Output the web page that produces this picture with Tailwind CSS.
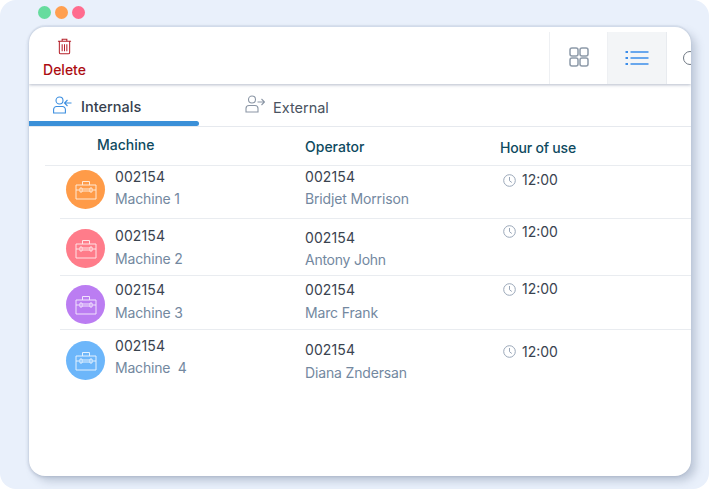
<!DOCTYPE html>
<html lang="en">
<head>
  <meta charset="UTF-8">
  <meta name="viewport" content="width=device-width,initial-scale=1">
  <title>Machines</title>
  <script src="https://cdn.jsdelivr.net/npm/@tailwindcss/browser@4"></script>
</head>
<body class="bg-white overflow-hidden font-['Inter',sans-serif]">
  <div class="w-[709px] h-[489px] bg-[#e9f0fb] rounded-[16px] pl-[29px] pt-[6px]">
    <!-- window dots -->
    <div class="flex gap-[4px] pl-[9px] h-[13px]">
      <span class="w-[13px] h-[13px] rounded-full bg-[#66dc9e]"></span>
      <span class="w-[13px] h-[13px] rounded-full bg-[#ff9f50]"></span>
      <span class="w-[13px] h-[13px] rounded-full bg-[#ff6b8e]"></span>
    </div>

    <div class="mt-[8px] w-[662px] h-[449px] bg-white rounded-[16px] overflow-hidden shadow-[0_-2px_1px_rgba(90,105,135,0.1),5px_5px_9px_rgba(90,105,135,0.3),-1px_1px_3px_rgba(90,105,135,0.22)]">
      <!-- toolbar -->
      <div class="h-[57px] flex shadow-[0_1px_3px_rgba(90,105,135,0.45)] relative">
        <div class="w-[520px] shrink-0 pl-[14px] pt-[11px]">
          <div class="w-[43px] flex flex-col items-center">
            <svg class="w-[15px] h-[17px]" viewBox="0 0 16 18" fill="none" stroke="#b5202a" stroke-width="1.1">
              <path d="M1 3.500h14M5.500 3.300V1.200h5v2.100M2.500 3.700v11.600c0 .9.600 1.500 1.500 1.500h8c.9 0 1.500-.6 1.500-1.500V3.700M5.500 6.500v7.500M8 6.500v7.500M10.500 6.500v7.500"/>
            </svg>
            <span class="mt-[7px] text-[14px] leading-[16px] font-medium text-[#ac0d12]">Delete</span>
          </div>
        </div>
        <div class="w-[59px] h-[52px] mt-[5px] shrink-0 border-x border-[#eef0f3] flex items-center justify-center">
          <svg class="w-[20px] h-[20px] -mt-[2px]" viewBox="0 0 20 20" fill="none" stroke="#8d9aa9" stroke-width="1.5">
            <rect x="1" y="1" width="8" height="8" rx="2"/><rect x="11" y="1" width="8" height="8" rx="2"/>
            <rect x="1" y="11" width="8" height="8" rx="2"/><rect x="11" y="11" width="8" height="8" rx="2"/>
          </svg>
        </div>
        <div class="w-[59px] h-[52px] mt-[5px] shrink-0 bg-[#f3f5f7] border-r border-[#e8ebef] flex items-center justify-center">
          <svg class="w-[24px] h-[16px]" viewBox="0 0 24 16" fill="none" stroke="#3b8dea" stroke-width="1.5">
            <path d="M5.500 2h18M5.500 8h18M5.500 14h18"/>
            <path d="M0.500 2h2.500M0.500 8h2.500M0.500 14h2.500" stroke-width="2.200"/>
          </svg>
        </div>
        <div class="pl-[16px] pt-[24px] shrink-0">
          <span class="block w-[14px] h-[14px] rounded-full border-[1.5px] border-[#6f7883]"></span>
        </div>
      </div>

      <!-- tabs -->
      <div class="h-[43px] flex border-b border-[#e6e9ee] relative">
        <div class="w-[170px] h-[42px] pl-[24px] pt-[12px] flex gap-[9px] relative">
          <svg class="w-[19px] h-[18px]" viewBox="0 0 19 18" fill="none" stroke="#3d8fe0" stroke-width="1.1">
            <circle cx="6.500" cy="4.500" r="3.500"/>
            <path d="M0.600 17h11.800v-3.500a3 3 0 0 0-3-3H3.600a3 3 0 0 0-3 3zM18.500 7h-7M14.500 4l-3 3 3 3"/>
          </svg>
          <span class="text-[14.5px] leading-[22px] font-medium text-[#36404e]">Internals</span>
          <span class="absolute left-0 bottom-0 w-[170px] h-[5px] rounded-r-full bg-[#3b90d8]"></span>
        </div>
        <div class="pl-[46px] pt-[11px] flex gap-[8px]">
          <svg class="w-[20px] h-[18px]" viewBox="0 0 20 18" fill="none" stroke="#8b96a5" stroke-width="1.100">
            <circle cx="7" cy="4.500" r="3.500"/>
            <path d="M1 17h12v-3.500a3 3 0 0 0-3-3H4a3 3 0 0 0-3 3zM12.500 7h7M16.500 4l3 3-3 3"/>
          </svg>
          <span class="text-[14.500px] leading-[23px] pt-[1px] text-[#4a5361]">External</span>
        </div>
      </div>

      <!-- table -->
      <div class="ml-[16px]">
        <div class="h-[39px] grid grid-cols-[260px_195px_1fr] border-b border-[#e9ecf0] text-[14px] font-medium text-[#0e4a60] leading-[16px]">
          <span class="pl-[52px] pt-[10px]">Machine</span>
          <span class="pt-[12px]">Operator</span>
          <span class="pt-[13px] tracking-[-0.2px]">Hour of use</span>
        </div>

        <div class="ml-[15px]">
          <!-- row 1 -->
          <div class="h-[53px] grid grid-cols-[245px_195px_1fr] border-b border-[#e9ecf0] text-[14px] leading-[20px]">
            <div class="flex pl-[6px]">
              <span class="mt-[4px] w-[39px] h-[39px] rounded-full bg-[#ff9b48] flex items-center justify-center">
                <svg class="w-[22px] h-[20px]" viewBox="0 0 22 20" fill="none" stroke="#ffe9d6" stroke-width="1"><path d="M7.500 5V1.500h7V5M1 5h20v14H1zM1 10h4M17 10h4M5 8h2v4H5zM15 8h2v4h-2zM7 9h8M7 11h8"/></svg>
              </span>
              <div class="pl-[10px] pt-[1px]">
                <p class="text-[#3a4350] tracking-[0.1px]">002154</p>
                <p class="mt-[2px] text-[#73889f] tracking-[-0.15px]">Machine 1</p>
              </div>
            </div>
            <div class="pt-[1px]">
              <p class="text-[#3a4350] tracking-[0.1px]">002154</p>
              <p class="mt-[2px] text-[#73889f] tracking-[-0.15px]">Bridjet Morrison</p>
            </div>
            <div class="flex items-start gap-[6px] pl-[3px] pt-[4px]">
              <svg class="w-[13px] h-[13px] mt-[4px]" viewBox="0 0 13 13" fill="none" stroke="#9aa7b8" stroke-width="1"><circle cx="6.500" cy="6.500" r="5.800"/><path d="M6.500 3v3.700l2.300 1.800"/></svg>
              <span class="text-[#3a4350]">12:00</span>
            </div>
          </div>
          <!-- row 2 -->
          <div class="h-[57px] grid grid-cols-[245px_195px_1fr] border-b border-[#e9ecf0] text-[14px] leading-[20px]">
            <div class="flex pl-[6px]">
              <span class="mt-[10px] w-[39px] h-[39px] rounded-full bg-[#ff7c8a] flex items-center justify-center">
                <svg class="w-[22px] h-[20px]" viewBox="0 0 22 20" fill="none" stroke="#ffe3e6" stroke-width="1"><path d="M7.500 5V1.500h7V5M1 5h20v14H1zM1 10h4M17 10h4M5 8h2v4H5zM15 8h2v4h-2zM7 9h8M7 11h8"/></svg>
              </span>
              <div class="pl-[10px] pt-[7px]">
                <p class="text-[#3a4350] tracking-[0.1px]">002154</p>
                <p class="mt-[3px] text-[#73889f] tracking-[-0.15px]">Machine 2</p>
              </div>
            </div>
            <div class="pt-[9px]">
              <p class="text-[#3a4350] tracking-[0.1px]">002154</p>
              <p class="mt-[2px] text-[#73889f] tracking-[-0.25px]">Antony John</p>
            </div>
            <div class="flex items-start gap-[6px] pl-[3px] pt-[3px]">
              <svg class="w-[13px] h-[13px] mt-[3px]" viewBox="0 0 13 13" fill="none" stroke="#9aa7b8" stroke-width="1"><circle cx="6.500" cy="6.500" r="5.800"/><path d="M6.500 3v3.700l2.300 1.800"/></svg>
              <span class="text-[#3a4350]">12:00</span>
            </div>
          </div>
          <!-- row 3 -->
          <div class="h-[54px] grid grid-cols-[245px_195px_1fr] border-b border-[#e9ecf0] text-[14px] leading-[20px]">
            <div class="flex pl-[6px]">
              <span class="mt-[9px] w-[39px] h-[39px] rounded-full bg-[#bb7df2] flex items-center justify-center">
                <svg class="w-[22px] h-[20px]" viewBox="0 0 22 20" fill="none" stroke="#f1e4fc" stroke-width="1"><path d="M7.500 5V1.500h7V5M1 5h20v14H1zM1 10h4M17 10h4M5 8h2v4H5zM15 8h2v4h-2zM7 9h8M7 11h8"/></svg>
              </span>
              <div class="pl-[10px] pt-[4px]">
                <p class="text-[#3a4350] tracking-[0.1px]">002154</p>
                <p class="mt-[3px] text-[#73889f] tracking-[-0.15px]">Machine 3</p>
              </div>
            </div>
            <div class="pt-[4px]">
              <p class="text-[#3a4350] tracking-[0.1px]">002154</p>
              <p class="mt-[3px] text-[#73889f] tracking-[-0.15px]">Marc Frank</p>
            </div>
            <div class="flex items-start gap-[6px] pl-[3px] pt-[3px]">
              <svg class="w-[13px] h-[13px] mt-[4px]" viewBox="0 0 13 13" fill="none" stroke="#9aa7b8" stroke-width="1"><circle cx="6.500" cy="6.500" r="5.800"/><path d="M6.500 3v3.700l2.300 1.800"/></svg>
              <span class="text-[#3a4350]">12:00</span>
            </div>
          </div>
          <!-- row 4 -->
          <div class="h-[60px] grid grid-cols-[245px_195px_1fr] text-[14px] leading-[20px]">
            <div class="flex pl-[6px]">
              <span class="mt-[11px] w-[39px] h-[39px] rounded-full bg-[#6cb6fa] flex items-center justify-center">
                <svg class="w-[22px] h-[20px]" viewBox="0 0 22 20" fill="none" stroke="#e3f1fe" stroke-width="1"><path d="M7.500 5V1.500h7V5M1 5h20v14H1zM1 10h4M17 10h4M5 8h2v4H5zM15 8h2v4h-2zM7 9h8M7 11h8"/></svg>
              </span>
              <div class="pl-[10px] pt-[6px]">
                <p class="text-[#3a4350] tracking-[0.1px]">002154</p>
                <p class="mt-[2px] text-[#73889f] tracking-[-0.2px] whitespace-pre">Machine  4</p>
              </div>
            </div>
            <div class="pt-[10px]">
              <p class="text-[#3a4350] tracking-[0.1px]">002154</p>
              <p class="mt-[3px] text-[#73889f] tracking-[-0.15px]">Diana Zndersan</p>
            </div>
            <div class="flex items-start gap-[6px] pl-[3px] pt-[12px]">
              <svg class="w-[13px] h-[13px] mt-[3px]" viewBox="0 0 13 13" fill="none" stroke="#9aa7b8" stroke-width="1"><circle cx="6.500" cy="6.500" r="5.800"/><path d="M6.500 3v3.700l2.300 1.800"/></svg>
              <span class="text-[#3a4350]">12:00</span>
            </div>
          </div>
        </div>
      </div>
    </div>
  </div>
</body>
</html>
